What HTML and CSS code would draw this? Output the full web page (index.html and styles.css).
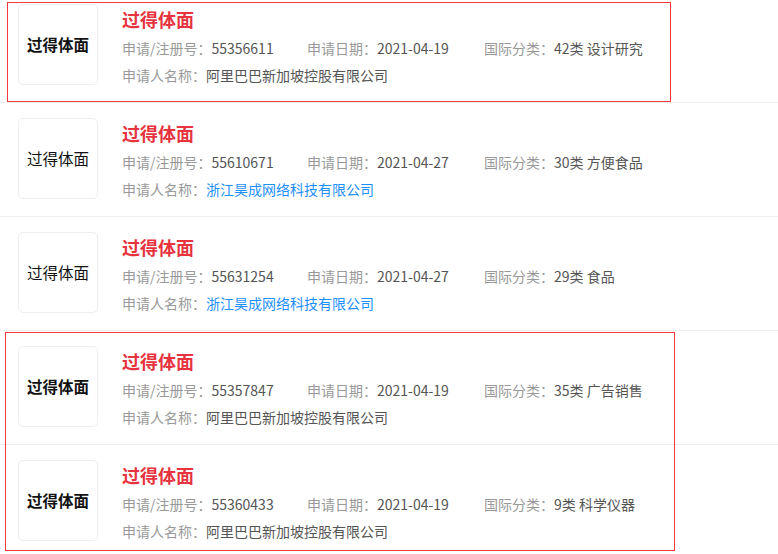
FILE: index.html
```html
<!DOCTYPE html>
<html lang="zh">
<head>
<meta charset="utf-8">
<title>商标列表</title>
<link rel="stylesheet" href="styles.css">
</head>
<body>
<div class="page">
  <ul class="list">
    <li class="item">
      <div class="logo bold">过得体面</div>
      <div class="info">
        <div class="title">过得体面</div>
        <div class="meta">
          <span class="col c1"><span class="lbl">申请/注册号：</span>55356611</span>
          <span class="col c2"><span class="lbl">申请日期：</span>2021-04-19</span>
          <span class="col"><span class="lbl">国际分类：</span>42类 设计研究</span>
        </div>
        <div class="meta"><span class="lbl">申请人名称：</span>阿里巴巴新加坡控股有限公司</div>
      </div>
    </li>
    <li class="item">
      <div class="logo">过得体面</div>
      <div class="info">
        <div class="title">过得体面</div>
        <div class="meta">
          <span class="col c1"><span class="lbl">申请/注册号：</span>55610671</span>
          <span class="col c2"><span class="lbl">申请日期：</span>2021-04-27</span>
          <span class="col"><span class="lbl">国际分类：</span>30类 方便食品</span>
        </div>
        <div class="meta"><span class="lbl">申请人名称：</span><a class="link" href="#">浙江昊成网络科技有限公司</a></div>
      </div>
    </li>
    <li class="item">
      <div class="logo">过得体面</div>
      <div class="info">
        <div class="title">过得体面</div>
        <div class="meta">
          <span class="col c1"><span class="lbl">申请/注册号：</span>55631254</span>
          <span class="col c2"><span class="lbl">申请日期：</span>2021-04-27</span>
          <span class="col"><span class="lbl">国际分类：</span>29类 食品</span>
        </div>
        <div class="meta"><span class="lbl">申请人名称：</span><a class="link" href="#">浙江昊成网络科技有限公司</a></div>
      </div>
    </li>
    <li class="item">
      <div class="logo bold">过得体面</div>
      <div class="info">
        <div class="title">过得体面</div>
        <div class="meta">
          <span class="col c1"><span class="lbl">申请/注册号：</span>55357847</span>
          <span class="col c2"><span class="lbl">申请日期：</span>2021-04-19</span>
          <span class="col"><span class="lbl">国际分类：</span>35类 广告销售</span>
        </div>
        <div class="meta"><span class="lbl">申请人名称：</span>阿里巴巴新加坡控股有限公司</div>
      </div>
    </li>
    <li class="item">
      <div class="logo bold">过得体面</div>
      <div class="info">
        <div class="title">过得体面</div>
        <div class="meta">
          <span class="col c1"><span class="lbl">申请/注册号：</span>55360433</span>
          <span class="col c2"><span class="lbl">申请日期：</span>2021-04-19</span>
          <span class="col"><span class="lbl">国际分类：</span>9类 科学仪器</span>
        </div>
        <div class="meta"><span class="lbl">申请人名称：</span>阿里巴巴新加坡控股有限公司</div>
      </div>
    </li>
  </ul>
  <div class="mark mark-a"></div>
  <div class="mark mark-b"></div>
</div>
</body>
</html>
```

FILE: styles.css
```css
html, body {
  margin: 0;
  padding: 0;
  background: #fff;
}
body {
  font-family: "Noto Sans CJK SC", "Noto Sans", sans-serif;
  overflow: hidden;
}
.page {
  position: relative;
  width: 778px;
  height: 554px;
  overflow: hidden;
}
.list {
  list-style: none;
  margin: -11px 0 0 0;
  padding: 0;
}
.item {
  display: flex;
  align-items: flex-start;
  gap: 24px;
  height: 113px;
  box-sizing: content-box;
  padding: 0 0 0 18px;
  border-bottom: 1px solid #eeeeee;
}
.logo {
  flex: none;
  margin-top: 15px;
  width: 78px;
  height: 79px;
  border: 1px solid #eeeeee;
  border-radius: 5px;
  display: flex;
  align-items: center;
  justify-content: center;
  font-size: 15.5px;
  color: #111;
  line-height: 1;
}
.logo.bold {
  font-weight: 700;
}
.info {
  padding-top: 3px;
  margin-top: 15px;
}
.title {
  font-size: 18px;
  line-height: 24px;
  font-weight: 700;
  color: #e6333e;
  margin-bottom: 4px;
}
.meta {
  display: flex;
  font-size: 14px;
  line-height: 27px;
  color: #555;
  white-space: nowrap;
}
.col.c1 {
  width: 185px;
}
.col.c2 {
  width: 177px;
}
.lbl {
  color: #999;
}
.link {
  color: #1e8fff;
  text-decoration: none;
}
.mark {
  position: absolute;
  border: 1px solid #f23b3f;
  box-sizing: border-box;
  pointer-events: none;
}
.mark-a {
  left: 7px;
  top: 2px;
  width: 664px;
  height: 100px;
}
.mark-b {
  left: 5px;
  top: 332px;
  width: 670px;
  height: 219px;
}
```
